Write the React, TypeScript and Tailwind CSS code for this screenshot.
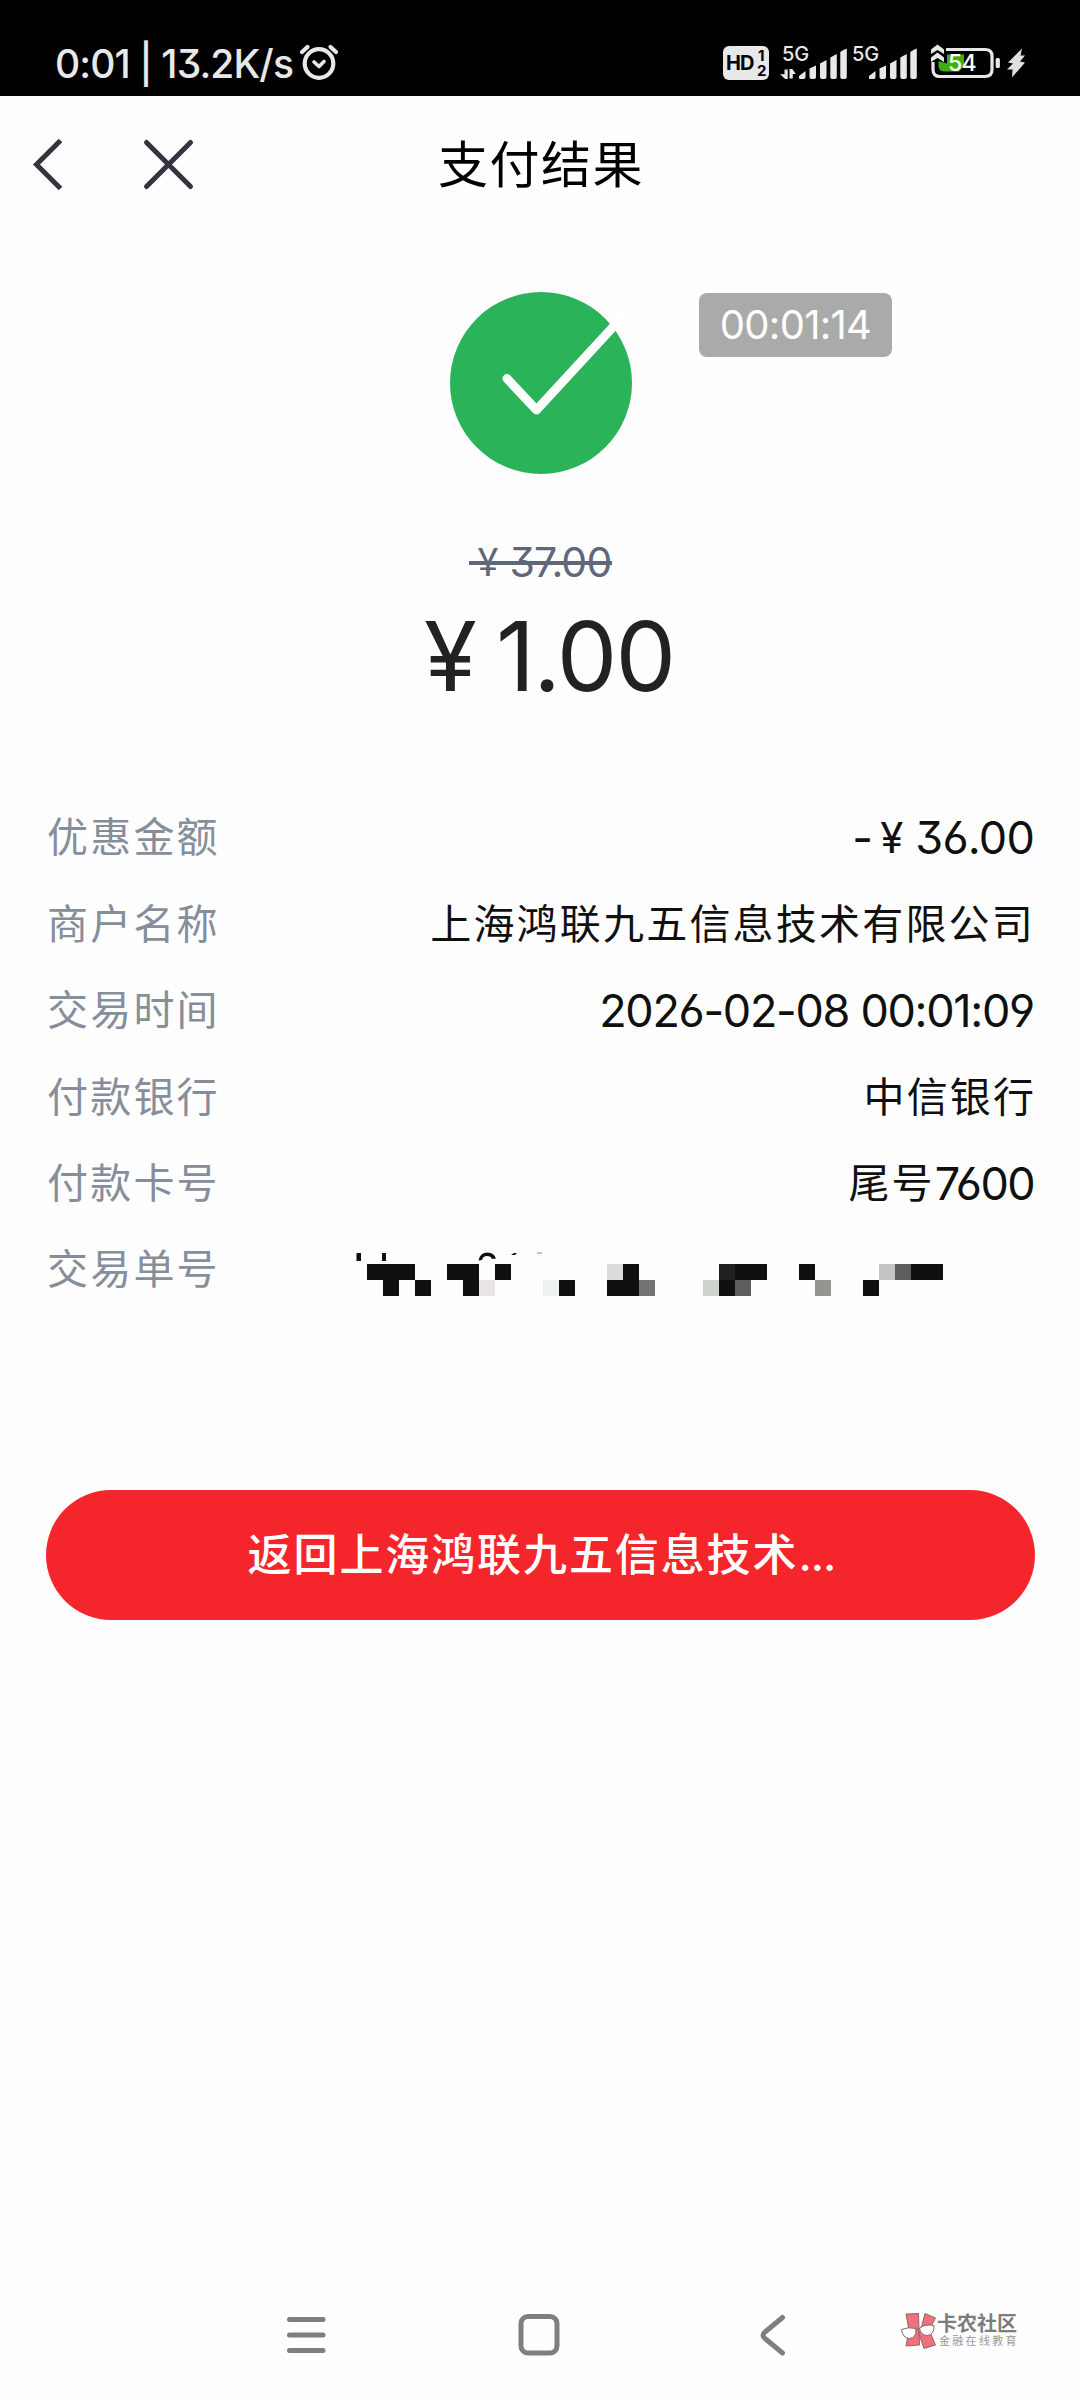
import React from 'react';

const details = [
  { label: '商户名称', value: '上海鸿联九五信息技术有限公司', className: 'tracking-[2.2px] -mr-[1px]' },
  { label: '交易时间', value: '2026-02-08 00:01:09', className: 'text-[45px] tracking-[-1.3px]' },
  { label: '付款银行', value: '中信银行', className: 'tracking-[2.1px] -mr-[2px]' },
];

const INK = '#101010';

// [column, row, colour] of the blocks that hide the order number
const mosaic: [number, number, string][] = [
  [0, 0, INK], [1, 0, INK], [2, 0, INK], [5, 0, INK], [6, 0, INK], [8, 0, INK],
  [15, 0, '#dddbde'], [16, 0, INK], [22, 0, '#202020'], [23, 0, INK], [24, 0, INK],
  [27, 0, INK], [32, 0, '#c5c3c6'], [33, 0, '#5c5e5b'], [34, 0, INK], [35, 0, INK],
  [1, 1, INK], [3, 1, INK], [6, 1, INK], [7, 1, '#e9e2e7'], [11, 1, '#edf2ee'],
  [12, 1, INK], [15, 1, INK], [16, 1, INK], [17, 1, '#737573'], [21, 1, '#cdd2cc'],
  [22, 1, INK], [23, 1, '#5c5e5b'], [28, 1, '#939591'], [31, 1, INK],
];

function AlarmIcon() {
  return (
    <svg width="40" height="38" viewBox="0 0 40 38" fill="none" stroke="#e8e8e8" strokeLinecap="round">
      <circle cx="20" cy="20.5" r="14.3" strokeWidth="4.2" />
      <path d="M3 9 L8.5 4 M37 9 L31.5 4" strokeWidth="4.2" />
      <path d="M15 19 L20 23.5 L25 18.5" strokeWidth="3.6" strokeLinejoin="round" />
    </svg>
  );
}

function Signal({ data }: { data?: boolean }) {
  return (
    <div className="relative w-[70px] h-[36px]">
      <span className="absolute left-[2px] top-[-4px] text-[20px] leading-[26px] font-medium">5G</span>
      <svg width="70" height="36" viewBox="0 0 70 36" fill="#e8e8e8">
        {data && (
          <path d="M4.5 24.5 h3.2 v9.5 h-2.5 L0 29.2 h4.5 Z M9.5 24 h2.8 l3.5 5 h-3 v4.5 h-3.3 Z" />
        )}
        <path d="M19 33.5 V31 L25.5 26 V32 q0 2 -2 2 H20 Z" />
        <path d="M29.5 23.5 L36 20.5 V32 q0 2 -2 2 h-2.5 q-2 0 -2 -2 Z" />
        <path d="M40 18.5 L46.5 15 V32 q0 2 -2 2 h-2.5 q-2 0 -2 -2 Z" />
        <path d="M50.3 12.5 L56.8 9 V32 q0 2 -2 2 h-2.5 q-2 0 -2 -2 Z" />
        <path d="M60.3 7 q3 -2.5 6.5 -3.5 V32 q0 2 -2 2 h-2.5 q-2 0 -2 -2 Z" />
      </svg>
    </div>
  );
}

function Battery() {
  return (
    <div className="relative w-[94px] h-[40px]">
      <svg width="94" height="40" viewBox="0 0 94 40">
        <path d="M7.5 21 L16 23.500 V14.500 H33 V26 L28 31.500 H14 Q7.5 31.500 7.5 26 Z" fill="#3fae0c" />
        <path
          d="M15 9.5 H54 Q61 9.5 61 16 V29.500 Q61 36.500 54 36.500 H9 Q2 36.500 2 29.500 V22"
          fill="none"
          stroke="#e8e8e8"
          strokeWidth="3.2"
        />
        <rect x="64.7" y="18" width="4.2" height="10" rx="1.5" fill="#e8e8e8" />
        <path d="M0 9.5 L6.5 4.5 L13 9.5 V14 L6.5 10 L0 14 Z M0 17.5 L6.5 12.5 L13 17.5 V22 L6.5 18 L0 22 Z" fill="#e8e8e8" />
        <path d="M91 8.5 L77 22.5 L82 23.5 L76 29.5 H81.5 L81 37.5 L94 22.5 L89 21.5 L94 15.5 H89.5 Z" fill="#e0e0e0" />
      </svg>
      <span className="absolute left-[17px] top-[9px] text-[23px] leading-[28px] font-medium tracking-[-0.6px] text-white">54</span>
    </div>
  );
}

function StatusBar() {
  return (
    <div className="flex h-24 w-full items-start justify-between bg-black text-[#e8e8e8]">
      <div className="flex pl-[55px] pt-[43px]">
        <span className="w-[244px] whitespace-nowrap text-[39px] leading-[41px] font-medium tracking-[-0.9px]">
          0:01 | 13.2K/s
        </span>
        <AlarmIcon />
      </div>
      <div className="flex pt-[45px]">
        <div className="relative mt-[1px] mr-[11px] h-[34px] w-[46px] rounded-[6px] bg-[#e8e8e8] text-black">
          <span className="absolute left-[3px] top-[5px] text-[20px] leading-[24px] font-bold tracking-[-1px]">HD</span>
          <span className="absolute left-[35px] top-[2px] text-[15px] leading-[15px] font-bold">1</span>
          <span className="absolute left-[34px] top-[17px] text-[15px] leading-[15px] font-bold">2</span>
        </div>
        <Signal data />
        <Signal />
        <div className="ml-[11px] -mt-[5px] mr-[55px]">
          <Battery />
        </div>
      </div>
    </div>
  );
}

function Header() {
  return (
    <div className="grid h-[138px] grid-cols-3 items-center">
      <svg width="200" height="60" viewBox="0 0 200 60" fill="none" stroke="#33343f" strokeWidth="5">
        <path d="M60.5 5.5 L36.5 29.5 L60.5 53.5" />
        <path d="M146.5 7.5 L190.5 51.5 M190.5 7.5 L146.5 51.5" strokeLinecap="round" />
      </svg>
      <h1 className="pl-[2px] text-center text-[50px] leading-[60px] tracking-[1.5px] text-black">支付结果</h1>
    </div>
  );
}

function Row({ label, children }: { label: string; children: React.ReactNode }) {
  return (
    <div className="flex h-[86.4px] items-center justify-between">
      <span className="text-[41px] tracking-[2.2px] text-[#878e9b]">{label}</span>
      {children}
    </div>
  );
}

function OrderNumber() {
  return (
    <svg width="678" height="50" viewBox="0 0 678 50" className="mt-[4px] mr-[2px]">
      <g fill={INK}>
        <rect x="2.5" y="6" width="4.5" height="8" />
        <rect x="28" y="6" width="4" height="8" />
        <path d="M124.5 13.5 Q126 5.5 133.5 5.5 Q140 5.5 142 11.5 L138 12 Q137 9 133 9 Q129 9 128 13 Z" />
        <path d="M157 8 L160 6 H163 L161 8 Z" />
        <rect x="183" y="5.5" width="5" height="1" opacity="0.5" />
      </g>
      {mosaic.map(([col, row, fill]) => (
        <rect key={`${col}-${row}`} x={13 + col * 16} y={17 + row * 16} width="16" height="16" fill={fill} shapeRendering="crispEdges" />
      ))}
    </svg>
  );
}

function Watermark() {
  return (
    <div className="flex">
      <svg width="36" height="42" viewBox="0 0 36 42" stroke="#86686b" strokeWidth="1">
        <path d="M5 4 L17.5 3.5 L18.5 35 L5 36 L8 20 Z" fill="#f0717d" />
        <path d="M21 15 L24 3.5 L34.5 8 L28 20 L34.5 35 L23 38.5 L18 24 Z" fill="#f0717d" />
        <path d="M0.5 19.5 Q7 16.5 15 18.5 Q15.5 28 8.5 28.5 Q1.5 28 0.5 19.5 Z" fill="#fff" />
        <path d="M18.5 18 Q25 13.5 33 15.5 Q33.5 24.5 26.5 25.5 Q19.5 25.5 18.5 18 Z" fill="#fff" />
        <path d="M15 19.5 L18.5 18.5" fill="none" />
      </svg>
      <div className="flex flex-col whitespace-nowrap pt-[3px]">
        <span className="text-[20px] leading-[22px] font-bold text-[#7c7c7c]">卡农社区</span>
        <span className="pl-[2px] text-[11px] leading-[13px] tracking-[2.3px] text-[#999]">金融在线教育</span>
      </div>
    </div>
  );
}

export default function App() {
  return (
    <div className="flex h-[2400px] w-[1080px] flex-col overflow-hidden bg-[#fefefe] font-[Inter,'Noto_Sans_CJK_SC',sans-serif] [font-feature-settings:'cv03','cv04','cv09']">
      <StatusBar />
      <Header />

      <div className="relative mt-[58px] flex justify-center pl-px">
        <svg width="182" height="182" viewBox="0 0 182 182">
          <circle cx="91" cy="91" r="91" fill="#2bb35a" />
          <path d="M57 86.5 L86.5 118 L169 28.5" fill="none" stroke="#fff" strokeWidth="9" strokeLinecap="round" strokeLinejoin="round" />
        </svg>
        <div className="absolute left-[699px] top-[1px] flex h-16 w-[193px] items-center justify-center rounded-lg bg-[#aaa] text-[40px] tracking-[-0.7px] text-white">
          00:01:14
        </div>
      </div>

      <div className="mt-[63px] flex h-[50px] items-center justify-center text-[#5f687b]">
        <span className="relative flex w-[143px] whitespace-nowrap text-[41px] leading-[50px]">
          <span className="w-[42px] pl-[9px] text-[38px]">¥</span>
          <span className="tracking-[-0.8px]">37.00</span>
          <span className="absolute left-0 top-[24px] h-[4px] w-full bg-[#5f687b]" />
        </span>
      </div>
      <div className="mt-[14px] flex h-[110px] items-center pl-[424px] text-[96px] leading-[110px] text-[#222]">
        <span className="w-[72px]">¥</span>
        <span className="tracking-[-1.8px]">1.00</span>
      </div>

      <div className="mt-[84px] flex flex-col pl-[47px] pr-[46px] text-[41px] text-[#101010]">
        <Row label="优惠金额">
          <span className="flex text-[45px]">
            <span className="w-[28px]">-</span>
            <span className="w-[35px] text-[42px] leading-[68px]">¥</span>
            <span className="tracking-[-0.8px]">36.00</span>
          </span>
        </Row>
        {details.map((item) => (
          <Row key={item.label} label={item.label}>
            <span className={item.className}>{item.value}</span>
          </Row>
        ))}
        <Row label="付款卡号">
          <span className="flex items-center">
            <span className="tracking-[2.2px]">尾号</span>
            <span className="text-[45px] tracking-[-1.6px]">7600</span>
          </span>
        </Row>
        <Row label="交易单号">
          <OrderNumber />
        </Row>
      </div>

      <button className="ml-[46px] mr-[45px] mt-[177px] h-[130px] rounded-full bg-[#f5262b] pl-[2px] text-[44px] font-medium tracking-[1.9px] text-white">
        返回上海鸿联九五信息技术<span className="tracking-[-1px]">...</span>
      </button>

      <div className="mt-auto flex h-[90px] items-start pl-[285px]">
        <svg width="616" height="50" viewBox="0 0 616 50" fill="none" stroke="#7f7f7f" strokeWidth="5" strokeLinecap="round">
          <path d="M4.5 9.5 H38 M4.5 25 H38 M4.5 40.5 H38" />
          <rect x="236" y="6.5" width="36" height="36.5" rx="7" />
          <path d="M497.5 7.5 L480 22 Q476 25 480 28.5 L497.5 43" strokeLinejoin="round" />
        </svg>
        <Watermark />
      </div>
    </div>
  );
}
